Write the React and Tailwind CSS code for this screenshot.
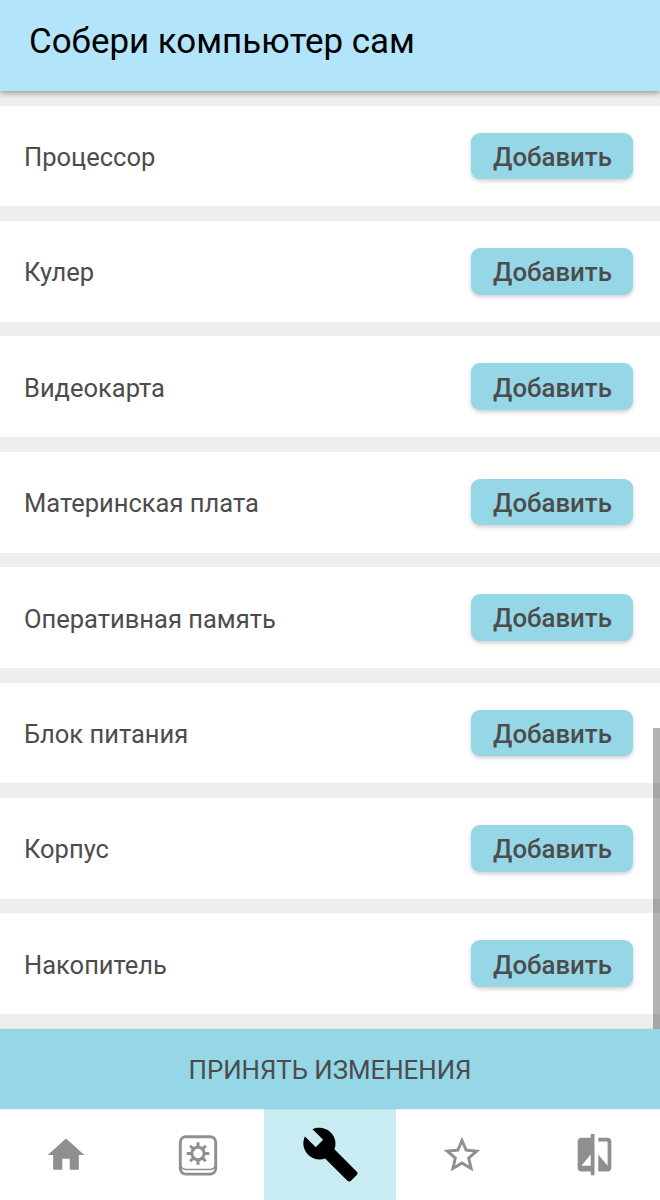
import React from "react";
import { MdBuild, MdCompare, MdHome, MdStarBorder } from "react-icons/md";

const parts = [
  "Процессор",
  "Кулер",
  "Видеокарта",
  "Материнская плата",
  "Оперативная память",
  "Блок питания",
  "Корпус",
  "Накопитель",
];

// Rounded key with a gear on its face
function PartsIcon() {
  return (
    <svg width="40" height="42" viewBox="0 0 40 42" fill="none" stroke="#8f8f8f">
      <rect x="2.3" y="2.7" width="35.4" height="37.4" rx="5.5" strokeWidth="2.9" />
      <path d="M3 32c.8 2.400 2.600 3.500 5 3.500h24c2.400 0 4.200-1.100 5-3.500" strokeWidth="1.300" />
      <circle cx="20" cy="19.500" r="6.200" strokeWidth="3" />
      <path
        d="M20 13V8.200M20 26V30.800M13.500 19.500H8.700M26.500 19.500H31.300M15.400 14.900l-3.200-3.200M24.600 14.900l3.200-3.200M15.400 24.100l-3.200 3.200M24.600 24.100l3.200 3.200"
        strokeWidth="3"
      />
    </svg>
  );
}

function PartRow({ name }) {
  return (
    <li className="mt-[14.6px] flex h-[100.8px] items-center justify-between bg-white pl-6 pr-[27px]">
      <span className="pt-[3.4px] text-[25.5px] leading-none">{name}</span>
      <button className="h-[46.6px] w-[162px] rounded-[9px] bg-[#96d7e7] pl-px pt-[3.4px] text-[25.8px] font-medium leading-none shadow-[0_2px_4px_rgba(0,0,0,0.2)]">
        Добавить
      </button>
    </li>
  );
}

function NavItem({ active, children }) {
  return (
    <a className={`flex flex-1 items-center justify-center ${active ? "bg-[#c9ebf2] text-black" : "text-[#8f8f8f]"}`}>
      {children}
    </a>
  );
}

export default function App() {
  return (
    <div className="relative flex h-[1200px] w-[660px] flex-col overflow-hidden bg-[#eeeeee] font-['Roboto',sans-serif] text-[#4c4c4c]">
      <header className="z-10 flex h-[91px] shrink-0 items-center bg-[#b2e5fa] pb-[6px] pl-[29px] shadow-[0_2px_6px_rgba(0,0,0,0.38)]">
        <h1 className="text-[34.9px] leading-none text-black">Собери компьютер сам</h1>
      </header>

      <ul className="h-[938px] shrink-0">
        {parts.map((name) => (
          <PartRow key={name} name={name} />
        ))}
      </ul>

      {/* scrollbar thumb */}
      <div className="absolute right-0 top-[728px] h-[301px] w-[7px] bg-black/30" />

      <button className="z-10 h-[80px] shrink-0 bg-[#96d7e7] pt-[4px] text-[25.8px] leading-none shadow-[0_0_1px_rgba(0,0,0,0.25)]">
        ПРИНЯТЬ ИЗМЕНЕНИЯ
      </button>

      <nav className="flex h-[91px] shrink-0 bg-white">
        <NavItem><MdHome size={44} /></NavItem>
        <NavItem><PartsIcon /></NavItem>
        <NavItem active><MdBuild size={59} /></NavItem>
        <NavItem><MdStarBorder size={44} /></NavItem>
        <NavItem><MdCompare size={45} /></NavItem>
      </nav>
    </div>
  );
}
